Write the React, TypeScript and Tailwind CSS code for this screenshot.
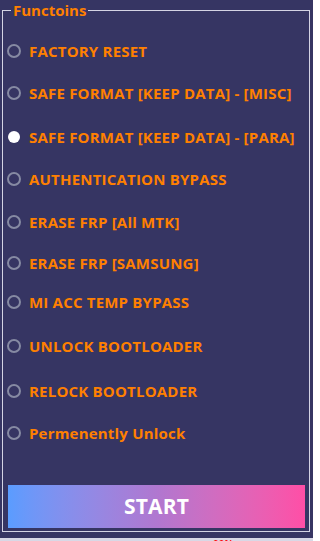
import React from "react";

const items: { label: string; mt: string; selected?: boolean }[] = [
  { label: "FACTORY RESET", mt: "mt-0" },
  { label: "SAFE FORMAT [KEEP DATA] - [MISC]", mt: "mt-[22px]" },
  { label: "SAFE FORMAT [KEEP DATA] - [PARA]", mt: "mt-[24px]", selected: true },
  { label: "AUTHENTICATION BYPASS", mt: "mt-[22px]" },
  { label: "ERASE FRP [All MTK]", mt: "mt-[23px]" },
  { label: "ERASE FRP [SAMSUNG]", mt: "mt-[21px]" },
  { label: "MI ACC TEMP BYPASS", mt: "mt-[19px]" },
  { label: "UNLOCK BOOTLOADER", mt: "mt-[24px]" },
  { label: "RELOCK BOOTLOADER", mt: "mt-[25px]" },
  { label: "Permenently Unlock", mt: "mt-[22px]" },
];

export default function App() {
  return (
    <div
      className="w-[313px] h-[541px] bg-[#363563] flex flex-col overflow-hidden"
      style={{ fontFamily: '"Open Sans", "Noto Sans", sans-serif' }}
    >
      <div className="pl-[2px] pr-[3px] pt-[10px]">
        <div className="relative h-[522px] border border-[#d4d4e4] flex flex-col">
          <div className="absolute -top-[11px] left-[8px] bg-[#363563] px-[2px] text-[15px] leading-[20px] font-bold text-[#ff8000]">
            Functoins
          </div>
          <div className="flex flex-col pt-[30px]">
            {items.map((it) => (
              <div key={it.label} className={`flex items-center h-[20px] ${it.mt}`}>
                <div className="ml-[4px] w-[14px] h-[14px] flex items-center justify-center shrink-0">
                  {it.selected ? (
                    <div className="w-[12px] h-[12px] rounded-full bg-white" />
                  ) : (
                    <div className="w-[14px] h-[14px] rounded-full border-2 border-[#868aa3]" />
                  )}
                </div>
                <span className="ml-[8px] text-[15px] font-bold text-[#ff8000] whitespace-nowrap tracking-[0.2px]">
                  {it.label}
                </span>
              </div>
            ))}
          </div>
          <div className="mt-auto mb-[3px] ml-[5px] mr-[4px] h-[43px] bg-gradient-to-r from-[#5a9cff] via-[#b077d0] to-[#ff4ea6] flex items-center justify-center">
            <span className="text-white font-bold text-[21px] tracking-[0.2px]">START</span>
          </div>
        </div>
      </div>
      <div className="mt-[6px] h-[4px] bg-[#d8d8e6] relative overflow-hidden">
        <span className="absolute left-[213px] top-[1px] text-[10px] leading-[10px] font-bold text-[#ff0000]">
          00%
        </span>
      </div>
    </div>
  );
}
